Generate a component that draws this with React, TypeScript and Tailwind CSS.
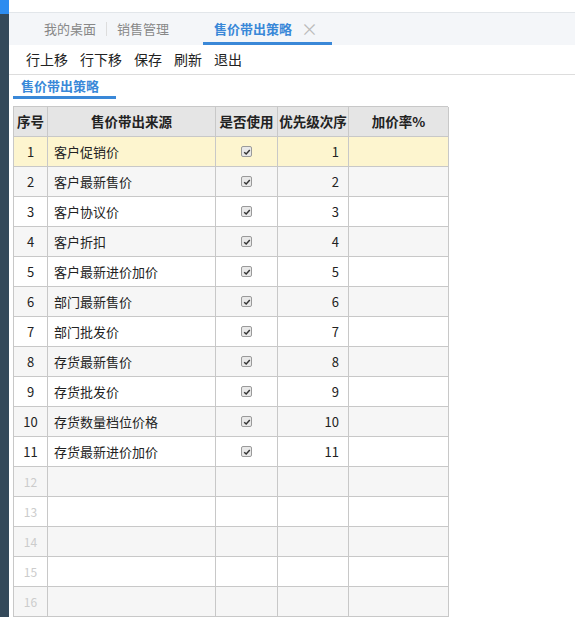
import React from "react";

const ROWS = [
  "客户促销价",
  "客户最新售价",
  "客户协议价",
  "客户折扣",
  "客户最新进价加价",
  "部门最新售价",
  "部门批发价",
  "存货最新售价",
  "存货批发价",
  "存货数量档位价格",
  "存货最新进价加价",
];

const cell = "border-r border-b border-[#c8c8c8] h-[30px]";

function Check() {
  return (
    <span className="inline-flex h-[11px] w-[11px] items-center justify-center rounded-[2px] border border-[#9a9a9a] bg-[#e8e8e8]">
      <svg viewBox="0 0 10 10" className="h-[8px] w-[8px]">
        <path d="M1.5 5.2 L4 7.5 L8.5 2.5" fill="none" stroke="#333" strokeWidth="1.8" />
      </svg>
    </span>
  );
}

export default function App() {
  const rows = Array.from({ length: 16 }, (_, i) => i);
  return (
    <div
      className="relative flex h-[617px] w-[575px] overflow-hidden bg-white text-[13px] text-[#333]"
      style={{ fontFamily: '"Microsoft YaHei", "Noto Sans CJK SC", sans-serif' }}
    >
      {/* left rail */}
      <div className="flex w-[9px] flex-col">
        <div className="h-[14px] bg-[#2d8cf0]" />
        <div className="flex-1 bg-[#34495a]" />
      </div>
      <div className="flex flex-1 flex-col">
        <div className="h-[14px] border-b border-[#e2e6ea] bg-white" />
        {/* tabs */}
        <div className="flex h-[32px] items-end bg-[#f4f6f9] pl-[25px]">
          <div className="flex h-full items-center px-[10px] text-[#888]">我的桌面</div>
          <div className="h-[14px] w-px self-center bg-[#ddd]" />
          <div className="flex h-full items-center px-[10px] text-[#888]">销售管理</div>
          <div className="ml-[24px] flex h-full w-[129px] items-center gap-[9px] border-b-[3px] border-[#3a88d8] pl-[11px] pt-[3px] font-bold text-[#3a88d8]">
            售价带出策略
            <span className="text-[17px] font-normal text-[#bbb]">×</span>
          </div>
        </div>
        {/* toolbar */}
        <div className="flex h-[32px] items-center gap-[12px] border-b border-[#ddd] pl-[17px] text-[14px] text-[#222]">
          <span>行上移</span>
          <span>行下移</span>
          <span>保存</span>
          <span>刷新</span>
          <span>退出</span>
        </div>
        {/* subtab */}
        <div className="flex h-[26px] items-end pl-[4px]">
          <div className="flex h-full w-[103px] items-center border-b-[3px] border-[#3a88d8] pl-[8px] font-bold text-[#3a88d8]">
            售价带出策略
          </div>
        </div>
        {/* table */}
        <div className="mt-[7px] ml-[4px] w-[435px] border-l border-t border-[#c8c8c8]">
          <div className="grid grid-cols-[34px_168px_62px_71px_100px] bg-[#e5e5e5] text-[13.5px] font-bold text-[#222]">
            <div className={`${cell} flex items-center justify-center`}>序号</div>
            <div className={`${cell} flex items-center justify-center`}>售价带出来源</div>
            <div className={`${cell} flex items-center justify-center`}>是否使用</div>
            <div className={`${cell} flex items-center justify-center`}>优先级次序</div>
            <div className={`${cell} flex items-center justify-center`}>加价率%</div>
          </div>
          {rows.map((i) => {
            const name = ROWS[i];
            const bg = i === 0 ? "bg-[#fdf5cf]" : i % 2 === 1 ? "bg-[#f6f6f6]" : "bg-white";
            return (
              <div key={i} className={`grid grid-cols-[34px_168px_62px_71px_100px] ${bg}`}>
                <div className={`${cell} flex items-center justify-center ${name ? "text-[#222]" : "text-[12px] text-[#ccc]"}`}>
                  {i + 1}
                </div>
                <div className={`${cell} flex items-center pl-[6px] text-[#222]`}>{name}</div>
                <div className={`${cell} flex items-center justify-center`}>{name && <Check />}</div>
                <div className={`${cell} flex items-center justify-end pr-[9px] text-[#222]`}>{name ? i + 1 : ""}</div>
                <div className={cell} />
              </div>
            );
          })}
        </div>
      </div>
    </div>
  );
}
